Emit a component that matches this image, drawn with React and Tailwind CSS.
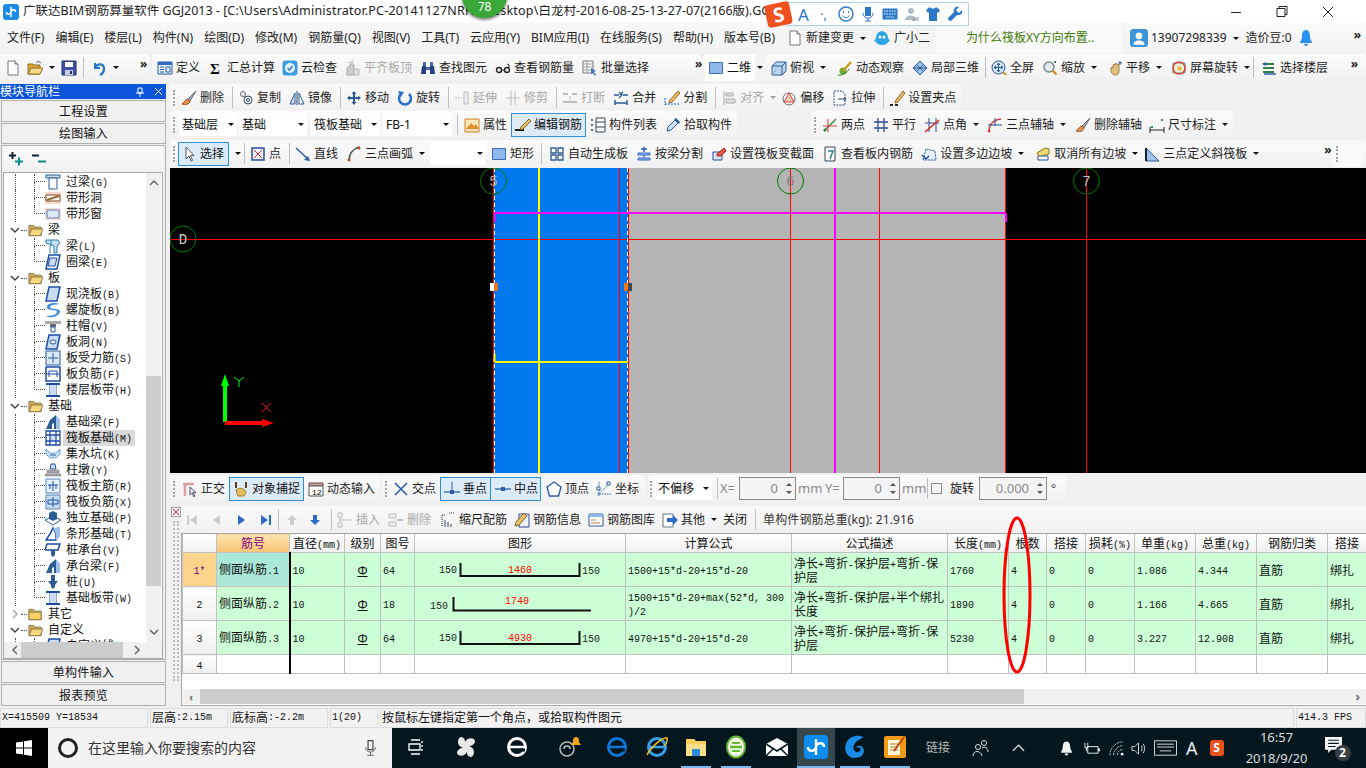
import React from "react";

// ---- little drawn icons, 16x16 box
const ic = {
  new: <><path d="M3 1h7l3 3v11H3z" fill="#fff" stroke="#777" /><path d="M10 1v3h3" fill="#ddd" stroke="#777" /></>,
  open: <><path d="M1 4h5l1 1h6v9H1z" fill="#d9a93e" stroke="#8a6a20" /><path d="M4 8h12l-3 6H1z" fill="#f7d98a" stroke="#8a6a20" /><path d="M9 3l2-2 3 2" fill="none" stroke="#3a6fb0" /></>,
  save: <><path d="M1 1h14v14H1z" fill="#3f4fa8" stroke="#23306e" /><path d="M4 2h8v5H4z" fill="#fff" /><path d="M4 10h8v5H4z" fill="#c8cce0" /><path d="M9 11h2v3H9z" fill="#23306e" /></>,
  undo: <><path d="M4 3v5h5" fill="none" stroke="#2a78c8" strokeWidth="2" /><path d="M4 8c2-5 9-5 9 1 0 3-2 5-4 6" fill="none" stroke="#2a78c8" strokeWidth="2.4" /></>,
  def: <><path d="M1 2h14v12H1z" fill="#e8f0fa" stroke="#2b5c9e" /><path d="M1 2h14v3H1z" fill="#2b6cc0" /><path d="M3 7h4M3 9.500h4M3 12h4M9 7h4v5H9z" fill="none" stroke="#2b5c9e" /></>,
  sigma: <text x="2" y="14" fontSize="15" fontWeight="700" fill="#111" fontFamily="Liberation Serif, serif">Σ</text>,
  cloud: <><rect x="0.500" y="0.500" width="15" height="15" rx="3" fill="#3d9be0" /><circle cx="8" cy="8" r="5" fill="#e8f4ff" /><path d="M5.500 8l2 2 3-4" fill="none" stroke="#2a78c8" strokeWidth="1.500" /></>,
  level: <><path d="M2 15V8l5-5 2 2v10z" fill="#ccc" stroke="#aaa" /><path d="M9 15V9h5v6z" fill="#ddd" stroke="#bbb" /><path d="M3 3l6-2" stroke="#bbb" /></>,
  binoc: <><path d="M2 6h4v8H1zM10 6h4l1 8h-5z" fill="#27407a" /><path d="M3 2h3v4H3zM10 2h3v4h-3zM6 7h4v3H6z" fill="#4a68a8" /></>,
  glasses: <><circle cx="4" cy="10" r="2.500" fill="none" stroke="#222" strokeWidth="1.400" /><circle cx="12" cy="10" r="2.500" fill="none" stroke="#222" strokeWidth="1.400" /><path d="M6.500 10h3M14 8V5l-2-1" fill="none" stroke="#222" /></>,
  batch: <><path d="M1 1h10v12H1z" fill="#fff" stroke="#777" /><path d="M1 4h10M1 7h10M1 10h10M5 1v12" stroke="#999" /><path d="M9 8l5 3-2 1 2 3-1 1-2-3-2 1z" fill="#4a78b8" /></>,
  sq: <path d="M1.500 2.500h13v11h-13z" fill="#8eb7ea" stroke="#3c6cb4" />,
  cube: <><path d="M1 6l4-4h10v9l-4 4H1z" fill="#bcd6ef" stroke="#2c5c94" /><path d="M1 6h10v9M11 6l4-4" fill="none" stroke="#2c5c94" /><path d="M5 2v9H1M5 11l-4 4" fill="none" stroke="#7aa0c8" strokeDasharray="1 1" /></>,
  orbit: <><circle cx="6" cy="11" r="3.500" fill="#68a838" /><path d="M6 11l8-9" stroke="#c8a020" strokeWidth="2.500" /><path d="M1 15c4 1 9-2 11-6" fill="none" stroke="#2c7c20" /></>,
  local3d: <><path d="M8 1l7 7-7 7-7-7z" fill="#9cc0e8" stroke="#2c5c94" /><path d="M4.500 4.500l7 7M11.500 4.500l-7 7M1 8h14" stroke="#2c5c94" /></>,
  full: <><circle cx="7.500" cy="7.500" r="6.500" fill="#d8e6f6" stroke="#2c5c94" /><path d="M7.500 3v9M3 7.500h9M7.500 3L6 5M7.500 3L9 5M7.500 12L6 10M7.500 12L9 10M3 7.500L5 6M3 7.500L5 9M12 7.500L10 6M12 7.500L10 9" fill="none" stroke="#2c5c94" /><path d="M12 12l3 3" stroke="#c89020" strokeWidth="2" /></>,
  zoom: <><circle cx="7" cy="7" r="5" fill="#e4eaf2" stroke="#788" strokeWidth="1.500" /><path d="M10.500 10.500l4 4" stroke="#c89020" strokeWidth="2.400" /><path d="M12 2h2M13 1v2" stroke="#345" /></>,
  pan: <><path d="M4 8l1-1 1 1V5l1-1 1 1V4l1-1 1 1v1l1-1 1 1v6c0 3-2 4-4 4H8c-2 0-3-2-4-3z" fill="#e0c080" stroke="#a08040" /><path d="M11 3h4M13 1v4" stroke="#34608c" /></>,
  rot: <><path d="M2 3h12v10H2z" fill="#dff0d0" stroke="#6a90b0" /><circle cx="8" cy="8" r="6" fill="none" stroke="#e04030" strokeWidth="1.500" /><path d="M6 8l3-2 2 3-3 2z" fill="#f0b030" /></>,
  layers: <><path d="M2 4h11M2 8h11M2 12h11" stroke="#2c8048" strokeWidth="2" /><path d="M5 2L1 4l4 2" fill="#2c60a8" /><path d="M3 14h12" stroke="#2c60a8" strokeWidth="1.500" /></>,
  brush: <><path d="M15 1L7 9l2 2z" fill="#a8b0c0" stroke="#666" /><path d="M7 9c-3 0-3 3-6 5 3 1 7 1 8-3z" fill="#e09050" stroke="#a05020" /></>,
  copy: <><circle cx="5" cy="4" r="2.500" fill="none" stroke="#667" /><circle cx="10" cy="10" r="4" fill="none" stroke="#345" /><circle cx="10" cy="10" r="1.500" fill="none" stroke="#345" /><path d="M6 6l2 2" stroke="#667" strokeDasharray="1 1" /></>,
  mirror: <><path d="M1 14L6 3v11z" fill="#cfe0f2" stroke="#2c5c94" /><path d="M15 14L10 3v11z" fill="#fff" stroke="#2c5c94" /><path d="M8 1v14" stroke="#345" /></>,
  move: <path d="M8 1l2.500 3H9v3h3V5.500L15 8l-3 2.500V9H9v3h1.500L8 15l-2.500-3H7V9H4v1.500L1 8l3-2.500V7h3V4H5.500z" fill="#2c5c94" />,
  rot2: <><path d="M12 4a6 6 0 1 1-8 0" fill="none" stroke="#2a70c8" strokeWidth="2.600" /><path d="M1 1l6 1-3 5z" fill="#2a70c8" /></>,
  extend: <><path d="M1 8h7" stroke="#bbb" strokeDasharray="2 1" /><path d="M10 2h4v12h-4z" fill="#eee" stroke="#bbb" /></>,
  trim: <path d="M6 1v14M10 1v14M1 8h14" stroke="#bbb" fill="none" />,
  brk: <><path d="M1 4h5M10 4h5M1 12h14" stroke="#bbb" strokeWidth="2" /><path d="M8 6v4" stroke="#bbb" /></>,
  merge: <><path d="M1 5h5M15 5h-5M6 2l3 3-3 3M10 2L7 5" fill="none" stroke="#2c5c94" strokeWidth="1.300" /><path d="M2 13h12M2 10v5M14 10v5" stroke="#2c5c94" strokeWidth="1.500" /></>,
  split: <><path d="M1 14h14M1 8v7" stroke="#2c5cd0" strokeDasharray="2 1" /><path d="M14 1L6 10l-1 3 3-1 8-9z" fill="#f0c060" stroke="#906020" /></>,
  align: <><path d="M3 1v14" stroke="#aaa" /><path d="M5 3h7v3H5zM5 9h9v4H5z" fill="#ddd" stroke="#aaa" /></>,
  offset: <><circle cx="8" cy="9" r="6" fill="#fff" stroke="#667" /><path d="M8 3l5 9H3z" fill="#f4c8b8" stroke="#d04830" /></>,
  stretch: <><path d="M2 1h8l3 3v11H2z" fill="#fff" stroke="#2c4c74" strokeDasharray="2 1" /><path d="M6 9h8M12 7l2 2-2 2" fill="none" stroke="#2c4c74" /></>,
  grip: <><path d="M1 15h3M6 15h3" stroke="#222" strokeWidth="2" /><path d="M14 1L7 10l-1 3 3-1 7-9z" fill="#e8c070" stroke="#906020" /></>,
  prop: <><path d="M1 2h14v13H1z" fill="#fbe6b8" stroke="#d08020" /><path d="M2 12l5-6 3 3 2-2 3 5z" fill="#e09030" /></>,
  edit: <><path d="M0 13h9" stroke="#111" strokeWidth="2" /><path d="M14 2L6 10l-1 3 3-1 8-8z" fill="#e8c070" stroke="#806020" /></>,
  list: <><path d="M1 2h2v2H1zM1 7h2v2H1zM1 12h2v2H1z" fill="#667" /><path d="M6 1h9v14H6zM6 5h9M6 10h9" fill="#fff" stroke="#345" /></>,
  pick: <><path d="M2 14l1-4 7-7 3 3-7 7z" fill="#cfe4f8" stroke="#2a5c9c" /><path d="M9 2l2-1 4 4-1 2z" fill="#2a5c9c" /></>,
  two: <><path d="M2 14L14 2" stroke="#2c8c38" strokeWidth="1.500" /><path d="M6 2v13M1 9h14" stroke="#d04040" /><circle cx="3" cy="13" r="1.500" fill="#2c8c38" /></>,
  para: <path d="M5 1v14M11 1v14M1 5h14M1 11h14" stroke="#2c4c94" strokeWidth="1.300" />,
  angle: <><path d="M5 1v14M12 1v14M1 6h14" stroke="#2c4c94" /><path d="M1 15L15 3" stroke="#e02020" strokeWidth="1.500" /></>,
  arc3: <><path d="M2 15C2 8 6 3 14 2" fill="none" stroke="#d84040" strokeWidth="1.500" /><circle cx="2" cy="14" r="1.500" fill="#d84040" /><path d="M1 8h14M8 1v8" stroke="#2c4c94" /></>,
  dim: <><path d="M1 13h14M1 10v6M15 10v6" stroke="#222" /><path d="M2 9h2v2H2zM12 2h2v2h-2z" fill="#2c9c38" /></>,
  cursor: <path d="M5 1v12l3-3 2 5 1.500-.6-2-5H13z" fill="#fff" stroke="#555" />,
  point: <><path d="M2 2h12v12H2z" fill="#e8f0fa" stroke="#2c4c94" strokeWidth="1.500" /><path d="M4 4l8 8M12 4l-8 8" stroke="#d03030" /></>,
  line: <><path d="M1 2l13 12" stroke="#2c60a8" strokeWidth="1.600" /><path d="M15 15l-6-1 4-4z" fill="#2c60a8" /></>,
  arc: <><path d="M3 15C3 8 7 3 13 1" fill="none" stroke="#555" strokeWidth="1.600" /><circle cx="3" cy="14" r="1.500" fill="#c04030" /><circle cx="13" cy="2" r="1.500" fill="#c04030" /></>,
  auto: <path d="M2 2h5v5H2zM9 2h5v5H9zM2 9h5v5H2zM9 9h5v5H9z" fill="#fff" stroke="#2c5c94" strokeWidth="1.300" />,
  beam: <><path d="M8 1v5M5 3h6" stroke="#2c60c0" strokeWidth="1.500" /><path d="M2 7h12v2H2zM2 12h12v2H2z" fill="#9cc0ec" stroke="#2c60c0" /><path d="M8 9v3" stroke="#2c60c0" /></>,
  raft: <><path d="M2 6h9v8H2z" fill="#dce8f8" stroke="#2c4c94" /><path d="M6 8l7-6 2 3-5 5H6z" fill="#e85848" stroke="#a02020" /></>,
  view: <><path d="M3 1h10v14H3z" fill="#fff" stroke="#345" /><path d="M6 5h5l-3 8" fill="none" stroke="#2c7c90" strokeWidth="1.500" /></>,
  poly: <><path d="M2 14L5 3l9 2 1 9z" fill="#e8f0fa" stroke="#2c4c94" strokeDasharray="2 1" /><path d="M1 9l4 4 3-3" fill="none" stroke="#1c4ca8" strokeWidth="1.500" /></>,
  cancel: <><path d="M2 7l8-5 4 1v5L4 11z" fill="#f4d870" stroke="#8a7020" /><path d="M3 10h10v4H3z" fill="#fff" stroke="#2c4c94" /></>,
  tri: <><path d="M2 2v13h13z" fill="#9cc4f0" stroke="#2c5c94" /><path d="M2 2v13" stroke="#123" strokeWidth="2" /></>,
  ortho: <><path d="M1 3h11M3 3v12" stroke="#d8a0a0" strokeWidth="2.500" /><path d="M8 6v8l2-2 2 4 1-.5-2-4h3z" fill="#eef" stroke="#556" /></>,
  snap: <><path d="M3 1v6M13 1v6" stroke="#6b3a10" strokeWidth="2" /><path d="M3 9c3-3 8-2 10 2l-2 4H5z" fill="#e8c060" stroke="#a08030" /></>,
  dyn: <><path d="M1 2h14v3H1z" fill="#d8a0a0" stroke="#555" /><path d="M1 5h14v10H1z" fill="#fff" stroke="#555" /><text x="4" y="14" fontSize="8" fontFamily="Liberation Mono, monospace">12</text></>,
  cross: <path d="M2 2l12 12M14 2L2 14" stroke="#2c60a8" strokeWidth="1.600" />,
  perp: <><path d="M8 1v10" stroke="#2c60a8" /><path d="M0 11h16" stroke="#2c60a8" strokeWidth="1.300" /><path d="M6 9h4v4H6z" fill="#2c60a8" /></>,
  mid: <><path d="M0 8h16" stroke="#2c60a8" strokeWidth="1.300" /><path d="M6 6h4v4H6z" fill="#2c60a8" /></>,
  vertex: <path d="M8 1l7 5-2.500 9h-9L1 6z" fill="#fff" stroke="#2c60a8" strokeWidth="1.400" />,
  coord: <><path d="M3 1v14M1 13h14M3 13L13 3" stroke="#2c60a8" strokeDasharray="1.500 1" /><path d="M11 1h3v3h-3zM1 6h3v3H1z" fill="#fff" stroke="#2c60a8" /></>,
  first: <><path d="M3 3v10" stroke="#ccc" strokeWidth="2" /><path d="M12 3v10L5 8z" fill="#ccc" /></>,
  prev: <path d="M11 3v10L4 8z" fill="#ccc" />,
  next: <path d="M5 3v10l7-5z" fill="#2c6cc8" />,
  last: <><path d="M13 3v10" stroke="#2c6cc8" strokeWidth="2" /><path d="M4 3v10l7-5z" fill="#2c6cc8" /></>,
  up: <path d="M8 3l5 5h-3v5H6V8H3z" fill="#ccc" />,
  down: <path d="M8 13l5-5h-3V3H6v5H3z" fill="#2c6cc8" />,
  ins: <><path d="M1 1h4v4H1zM1 11h4v4H1zM8 8h7" fill="none" stroke="#bbb" /><path d="M3 5v6M3 8h4" stroke="#bbb" /></>,
  del: <><path d="M1 2h7v4H1zM1 10h7v4H1z" fill="#eee" stroke="#bbb" /><path d="M9 8h6" stroke="#bbb" strokeWidth="2" /></>,
  scale: <><path d="M2 3v12M2 3h3M9 1h5" stroke="#222" strokeDasharray="1 1" /><path d="M5 8v7M8 10v5M11 12v3" stroke="#345" /></>,
  info: <><path d="M5 2h10v13H5z" fill="#eef2f8" stroke="#2c4c94" /><path d="M10 1L2 10l-1 4 4-1 8-9z" fill="#e8c070" stroke="#806020" /></>,
  lib: <><path d="M1 2h14v12H1z" fill="#fff" stroke="#2c5c94" /><path d="M1 2h14v3H1z" fill="#8eb7ea" /><path d="M3 8h5M3 11h9" stroke="#c08040" /></>,
  other: <><path d="M1 2h10v13H1z" fill="#fff" stroke="#678" /><path d="M5 6h6V3l5 5-5 5v-3H5z" fill="#2c6cc8" /></>,
};

// tree leaf icons, mostly blue boxes
const leaf = {
  lintel: <><path d="M1 1h14v3H1z" fill="#c9dcf2" stroke="#2c5c94" /><path d="M4 4h8v11H4z" fill="#fff" stroke="#2c5c94" /></>,
  hole: <><path d="M0 2h16v12H0z" fill="#f8d8c8" /><path d="M1 5h14v6H1z" fill="#fff" stroke="#7a4a20" /><path d="M2 10L14 6" stroke="#9a6a30" strokeWidth="2" /></>,
  win: <><path d="M0 2h16v12H0z" fill="#f8d8d0" /><path d="M2 4h12v8H2z" fill="#dce8f8" stroke="#5a84bc" /></>,
  beam: <><path d="M1 2h12l2 3-3 3v7H9V8L1 5z" fill="#c4def4" stroke="#2c7cb4" /><path d="M6 2v6M5 8v7" stroke="#2c7cb4" /></>,
  ring: <><path d="M4 1h11l-3 14H1z" fill="#fff" stroke="#1c4ca8" strokeWidth="1.500" /><path d="M5 4h7l-2 8H3z" fill="#c9dcf2" stroke="#1c4ca8" /></>,
  slab: <path d="M4 1h11l-3 14H1z" fill="#c9dcf2" stroke="#1c4ca8" strokeWidth="1.500" />,
  spiral: <path d="M15 2C6-1 1 3 2 6s10 1 10 4-7 4-11 4c5 3 13 0 14-4S4 8 5 5s6-2 10-3z" fill="#3c8cdc" />,
  cap: <><path d="M0 3h16v3H0z" fill="#aaa" /><path d="M5 6h6v3H5z" fill="#667" /><path d="M6 9h4v5H6z" fill="#fff" stroke="#2c5c94" /></>,
  opening: <><path d="M4 1h11l-3 14H1z" fill="#c9dcf2" stroke="#1c4ca8" strokeWidth="1.500" /><ellipse cx="8" cy="8" rx="3" ry="2" fill="#fff" stroke="#1c4ca8" /></>,
  rebarA: <><path d="M1 1h14v14H1z" fill="#dce8f8" stroke="#2c5c94" /><path d="M8 3v10M3 8h10" stroke="#2c5c94" /></>,
  rebarB: <><path d="M1 1h14v14H1z" fill="#fff" stroke="#1c4ca8" strokeWidth="1.500" /><path d="M2 8h12M4 5h8M4 5v6M12 5v6" stroke="#1c4ca8" /></>,
  band: <><path d="M1 2h14M1 14h14" stroke="#1c4ca8" strokeWidth="2" /><path d="M5 2v12M11 2v12" stroke="#1c4ca8" /><path d="M5 3h6v10H5z" fill="#c9dcf2" /></>,
  fbeam: <><path d="M1 15l4-9 6-5v14H9V9l-2 1v5z" fill="#2c5c94" /><path d="M11 1l4 5v9h-4z" fill="#9cc0e8" /></>,
  raft: <><path d="M1 1h14v14H1zM5 1v14M11 1v14M1 5h14M1 11h14" fill="none" stroke="#1c4ca8" strokeWidth="1.300" /><path d="M6 6h4v4H6z" fill="#c9dcf2" /></>,
  pit: <><path d="M1 3l4 4h6l4-4v5l-4 4H5L1 8z" fill="#c4e0f8" stroke="#4a88c8" strokeDasharray="2 1" /><path d="M5 9h6" stroke="#2c5c94" /></>,
  pier: <><path d="M6 2h4l1 5H5z" fill="#c9dcf2" stroke="#2c5c94" /><path d="M2 8h12v3H2zM0 12h16v2H0z" fill="#aaa" stroke="#667" strokeWidth=".5" /></>,
  main: <><path d="M1 1h14v14H1z" fill="#e8f2fc" stroke="#5a84bc" /><path d="M8 3v10M3 7h10M5 7v4M11 7v4" stroke="#1c4ca8" /></>,
  neg: <><path d="M1 1h14v14H1z" fill="#c9dcf2" stroke="#5a84bc" /><path d="M8 3v10M3 6h10M3 10h10M3 6v4M13 6v4" stroke="#1c4ca8" /></>,
  iso: <><path d="M0 10l8-4 8 4-8 5z" fill="#fff" stroke="#2c5c94" /><path d="M4 3l4-2 4 2v6l-4 2-4-2z" fill="#2c5c94" /></>,
  strip: <><path d="M1 14h10V8l-3-6-3 6z" fill="#fff" stroke="#1c4ca8" strokeWidth="1.500" /><path d="M8 2l7-1v10l-4 3V8z" fill="#9cc0e8" /></>,
  pilecap: <><path d="M2 2h13l-2 6H0z" fill="#fff" stroke="#1c4ca8" strokeWidth="1.500" /><path d="M6 8h4v5l-2 2-2-2z" fill="#2c5c94" /></>,
  pile: <path d="M6 1h4v6h3l-3 4v2l-2 2-2-2v-2L3 7h3z" fill="#2c5c94" />,
};

// ---- small parts

const Ic = ({ name }) => <svg viewBox="0 0 16 16" className="w-4 h-4 shrink-0">{ic[name]}</svg>;

const Arrow = ({ gray, tight }) => (
  <span className={tight ? "w-2 ml-[2px] shrink-0 flex justify-center" : "w-2 ml-[5px] shrink-0 flex justify-center"}>
    <span className={gray ? "w-0 h-0 border-x-[3px] border-t-[3px] border-x-transparent border-t-[#999]" : "w-0 h-0 border-x-[3px] border-t-[3px] border-x-transparent border-t-[#111]"} />
  </span>
);

const Sep = () => <span className="w-px h-[21px] bg-[#bdbdbd] mr-[5px] shrink-0" />;
const Grip = () => <span className="w-[3px] h-[16px] border-l-2 border-dotted border-[#a5a5a5] shrink-0" />;
const More = ({ className }) => <span className={className + " text-[12px] font-bold leading-none text-[#222] -mt-[7px] shrink-0"}>»</span>;

const Tool = ({ icon, label, gray, arrow, className = "mr-2" }) => (
  <div className={"flex items-center gap-[3px] shrink-0 whitespace-nowrap " + className}>
    <Ic name={icon} />
    <span className={gray ? "text-[#a8a8a8]" : "text-[#1c1c1c]"}>{label}</span>
    {arrow && <Arrow gray={gray} tight />}
  </div>
);

const Pressed = ({ icon, label, className }) => (
  <div className={"flex items-center gap-[3px] h-[24px] border border-[#2d8fdc] bg-[#dcebf8] whitespace-nowrap shrink-0 " + className}>
    <Ic name={icon} />
    <span>{label}</span>
  </div>
);

const Combo = ({ text, className }) => (
  <div className={"h-[23px] bg-white flex items-center justify-between pl-[3px] pr-[3px] shrink-0 whitespace-nowrap " + className}>
    <span>{text}</span>
    <span className="w-0 h-0 border-x-[3px] border-t-[3px] border-x-transparent border-t-[#111]" />
  </div>
);

const Group = ({ children, className }) => (
  <div className={"flex items-center rounded-sm shrink-0 bg-gradient-to-b from-[#fbfbfb] to-[#f1f1f1] " + className}>{children}</div>
);

// latin runs in these grid/tree texts are a narrow fixed font
const T = ({ s }) =>
  s.split(/([\x00-\x7f]+)/).map((p, i) =>
    /[\x00-\x7f]/.test(p) ? (
      <span key={i} className="font-['Liberation_Mono',monospace] text-[10px]">{p}</span>
    ) : (
      p
    )
  );

// ---- title + menu

const menus = ["文件(F)", "编辑(E)", "楼层(L)", "构件(N)", "绘图(D)", "修改(M)", "钢筋量(Q)", "视图(V)", "工具(T)", "云应用(Y)", "BIM应用(I)", "在线服务(S)", "帮助(H)", "版本号(B)"];

const TitleBar = () => (
  <div className="h-[23px] bg-white flex items-center shrink-0">
    <div className="w-[16px] h-[16px] ml-[3px] mr-[4px] rounded-[3px] bg-[#1b8be8] flex items-center justify-center">
      <svg viewBox="0 0 16 16" className="w-3 h-3"><path d="M8 1v14M2 8c0 4 5 4 6 0s6-4 6 0" fill="none" stroke="#fff" strokeWidth="2" /></svg>
    </div>
    <span className="w-[745px] overflow-hidden whitespace-nowrap text-[#222] text-[12.500px]">
      广联达BIM钢筋算量软件 GGJ2013 - [<span className="tracking-[0.200px]">C:\Users\Administrator.PC-20141127NRHI\Desktop\</span>白龙村-2016-08-25-13-27-07(2166版).GGJ12]
    </span>
    <svg viewBox="0 0 117 16" className="w-[117px] h-4 ml-auto mr-[18px]" fill="none" stroke="#222">
      <path d="M0 8.500h10M46 4.500h8v8h-8zM48 4.500v-2h8v8h-2M92 3l10 10M102 3L92 13" />
    </svg>
  </div>
);

const MenuBar = () => (
  <div className="h-[30px] flex items-center shrink-0 bg-[#f4f4f4] text-[#222]">
    <div className="flex items-center h-full pl-[7px] w-[787px] shrink-0 bg-gradient-to-b from-[#f8f8f8] to-[#f2f2f2]">
      {menus.map((m) => (
        <span key={m} className="mr-[11px] whitespace-nowrap shrink-0">{m}</span>
      ))}
    </div>
    <div className="flex items-center h-full w-[149px] shrink-0">
      <Tool icon="new" label="新建变更" arrow className="mr-[7px]" />
      <svg viewBox="0 0 16 16" className="w-4 h-4 mr-1 shrink-0"><path d="M2 8c0-9 12-9 12 0l2 3-2 1c-1 4-11 4-12 0l-2-1z" fill="#2ea3e8" /><circle cx="6" cy="7" r="1.500" fill="#fff" /><circle cx="10" cy="7" r="1.500" fill="#fff" /></svg>
      <span className="whitespace-nowrap">广小二</span>
    </div>
    <div className="w-[186px] h-full shrink-0 bg-[#f9f9f9] pl-[30px] flex items-center text-[#3d7a06] whitespace-nowrap">为什么筏板XY方向布置..</div>
    <div className="w-[239px] h-full ml-[5px] shrink-0 flex items-center rounded-sm bg-gradient-to-b from-[#fbfbfb] to-[#f1f1f1] pl-[3px]">
      <svg viewBox="0 0 16 16" className="w-[18px] h-[18px]"><rect width="16" height="16" rx="3" fill="#3d94d8" /><circle cx="8" cy="6" r="3" fill="#fff" /><path d="M3 14c0-5 10-5 10 0z" fill="#fff" /></svg>
      <span className="ml-[3px]">13907298339</span>
      <Arrow />
      <span className="ml-[6px]">造价豆:0</span>
      <svg viewBox="0 0 16 16" className="w-4 h-[18px] ml-[6px]"><path d="M8 0c-3 0-4 3-4 7 0 3-2 4-2 6h12c0-2-2-3-2-6 0-4-1-7-4-7zM6 14a2 2 0 0 0 4 0z" fill="#2a8ff0" /></svg>
      <More className="ml-auto mr-[5px]" />
    </div>
  </div>
);

const Row1 = () => (
  <div className="h-[27px] mt-px flex items-center shrink-0">
    <Group className="w-[150px] h-full pl-[5px]">
      <Ic name="new" />
      <span className="ml-[6px]"><Ic name="open" /></span>
      <Arrow />
      <span className="ml-[5px] mr-[6px]"><Ic name="save" /></span>
      <Sep />
      <span className="ml-[2px]"><Ic name="undo" /></span>
      <Arrow />
      <More className="ml-[20px]" />
    </Group>
    <Group className="w-[549px] h-full ml-[2px] pl-[5px]">
      <Tool icon="def" label="定义" />
      <Tool icon="sigma" label="汇总计算" className="mr-[7px]" />
      <Tool icon="cloud" label="云检查" />
      <Tool icon="level" label="平齐板顶" gray />
      <Tool icon="binoc" label="查找图元" />
      <Tool icon="glasses" label="查看钢筋量" />
      <Tool icon="batch" label="批量选择" />
      <More className="ml-[38px]" />
    </Group>
    <Group className="ml-[2px] w-[663px] h-full pl-[2px]">
      <div className="flex items-center gap-[3px] h-full bg-white pl-[3px] pr-[4px] w-[50px] shrink-0">
        <Ic name="sq" />
        <span>二维</span>
      </div>
      <span className="bg-[#f3f3f3] h-full w-[11px] flex items-center mr-[5px] shrink-0"><span className="-ml-[4px]"><Arrow /></span></span>
      <Tool icon="cube" label="俯视" arrow className="mr-[10px]" />
      <Tool icon="orbit" label="动态观察" />
      <Tool icon="local3d" label="局部三维" className="mr-[6px]" />
      <Sep />
      <Tool icon="full" label="全屏" />
      <Tool icon="zoom" label="缩放" arrow className="mr-[9px]" />
      <Tool icon="pan" label="平移" arrow className="mr-[8px]" />
      <Tool icon="rot" label="屏幕旋转" arrow className="mr-[2px]" />
      <Sep />
      <span className="w-[2px] shrink-0" />
      <Tool icon="layers" label="选择楼层" />
      <More className="ml-auto mr-[8px]" />
    </Group>
  </div>
);

const Row2 = () => (
  <Group className="w-[791px] h-[27px] pl-[3px]">
    <Grip />
    <span className="w-[5px] shrink-0" />
    <Tool icon="brush" label="删除" />
    <Sep />
    <Tool icon="copy" label="复制" />
    <Tool icon="mirror" label="镜像" />
    <Sep />
    <Tool icon="move" label="移动" />
    <Tool icon="rot2" label="旋转" />
    <Sep />
    <Tool icon="extend" label="延伸" gray />
    <Tool icon="trim" label="修剪" gray />
    <Sep />
    <Tool icon="brk" label="打断" gray />
    <Tool icon="merge" label="合并" />
    <Tool icon="split" label="分割" />
    <Sep />
    <Tool icon="align" label="对齐" gray arrow className="mr-[4px]" />
    <Tool icon="offset" label="偏移" />
    <Tool icon="stretch" label="拉伸" />
    <Sep />
    <Tool icon="grip" label="设置夹点" />
  </Group>
);

const Row3 = () => (
  <div className="h-[27px] flex shrink-0">
    <Group className="w-[567px] h-full pl-[3px]">
      <Grip />
      <span className="w-[3px] shrink-0" />
      <Combo text="基础层" className="w-[58px] mr-[2px]" />
      <Combo text="基础" className="w-[68px] mr-[4px]" />
      <Combo text="筏板基础" className="w-[69px] mr-[3px]" />
      <Combo text="FB-1" className="w-[69px] mr-[5px]" />
      <Sep />
      <span className="w-px shrink-0" />
      <Tool icon="prop" label="属性" className="mr-1" />
      <Pressed icon="edit" label="编辑钢筋" className="w-[75px] pl-[3px] mr-1" />
      <Tool icon="list" label="构件列表" />
      <Tool icon="pick" label="拾取构件" />
    </Group>
    <Group className="w-[422px] h-full ml-[74px] pl-[3px]">
      <Grip />
      <span className="w-[5px] shrink-0" />
      <Tool icon="two" label="两点" />
      <Tool icon="para" label="平行" />
      <Tool icon="angle" label="点角" arrow className="mr-[7px]" />
      <Tool icon="arc3" label="三点辅轴" arrow className="mr-[8px]" />
      <Tool icon="brush" label="删除辅轴" className="mr-[7px]" />
      <Tool icon="dim" label="尺寸标注" arrow />
    </Group>
  </div>
);

const Row4 = () => (
  <div className="h-[27px] mt-[2px] flex shrink-0">
    <Group className="w-[1196px] h-full pl-[3px]">
      <Grip />
      <span className="w-[2px] shrink-0" />
      <Pressed icon="cursor" label="选择" className="w-[51px] pl-[2px]" />
      <Arrow />
      <span className="w-[2px] shrink-0" />
      <Sep />
      <Tool icon="point" label="点" />
      <Sep />
      <Tool icon="line" label="直线" />
      <Tool icon="arc" label="三点画弧" arrow className="mr-[4px]" />
      <Combo text="" className="w-[56px] mr-[5px]" />
      <Tool icon="sq" label="矩形" className="mr-[7px]" />
      <Sep />
      <span className="w-[2px] shrink-0" />
      <Tool icon="auto" label="自动生成板" className="mr-[8px]" />
      <Tool icon="beam" label="按梁分割" className="mr-[8px]" />
      <Tool icon="raft" label="设置筏板变截面" />
      <Tool icon="view" label="查看板内钢筋" />
      <Tool icon="poly" label="设置多边边坡" arrow className="mr-[10px]" />
      <Tool icon="cancel" label="取消所有边坡" arrow className="mr-[5px]" />
      <Tool icon="tri" label="三点定义斜筏板" arrow />
      <More className="ml-[56px]" />
      <div className="ml-auto mr-1 flex items-center w-[30px] h-full bg-[#fafafa] pl-1 shrink-0"><Grip /></div>
    </Group>
  </div>
);

// ---- CAD view

const AxisMark = ({ x, y, t, c }) => (
  <g>
    <circle cx={x} cy={y} r="13" fill="none" stroke="#007a00" />
    <text x={x} y={y + 5} textAnchor="middle" fontSize="14" fontFamily="Liberation Mono, monospace" fill={c}>{t}</text>
  </g>
);

const Canvas = () => (
  <svg viewBox="170 168 1196 305" className="w-[1196px] h-[305px] block shrink-0 mt-px bg-black">
    <rect x="494" y="168" width="134" height="305" fill="#0078f0" />
    <rect x="628" y="168" width="377" height="305" fill="#b4b4b4" />
    <g fill="none" strokeWidth="1" stroke="#f00">
      <path d="M170 239.500h1196M493.500 168v305M619.500 168v305M628.500 168v305M790.500 168v305M879.500 168v305M1005.500 168v305M1086.500 168v305" />
    </g>
    <path d="M494.500 168v305M627.500 168v305" stroke="#fff" strokeDasharray="4 3" />
    <path d="M539 168v305" stroke="#ff0" strokeWidth="2" />
    <path d="M495 362h133M494.500 354v8" stroke="#ff0" strokeWidth="2" fill="none" />
    <path d="M835 168v305" stroke="#f0f" strokeWidth="2" />
    <path d="M494 213h512M494.500 213v9M1006 213v9" stroke="#f0f" strokeWidth="2" fill="none" />
    <rect x="490" y="283" width="4" height="8" fill="#fff" />
    <rect x="494" y="283" width="4" height="8" fill="#e87820" />
    <rect x="624" y="283" width="4" height="8" fill="#e87820" />
    <rect x="628" y="283" width="4" height="8" fill="#3a4a50" />
    <AxisMark x={493.500} y={181} t="5" c="#b0a8a0" />
    <AxisMark x={790.500} y={181} t="6" c="#808080" />
    <AxisMark x={1086.500} y={181} t="7" c="#b0c8d8" />
    <AxisMark x={183} y={239} t="D" c="#d0d0d0" />
    {/* ucs */}
    <path d="M225 422V380" stroke="#0f0" strokeWidth="4" />
    <path d="M225 374l-4 12h8z" fill="#0f0" />
    <path d="M225 423h40" stroke="#f00" strokeWidth="4" />
    <path d="M274 423l-12-4v8z" fill="#f00" />
    <path d="M234 377l5 4 5-4M239 381v6" stroke="#0f0" fill="none" />
    <path d="M262 403l9 9M271 403l-9 9" stroke="#f00" fill="none" />
  </svg>
);

// ---- snap row

const Spin = ({ val, className }) => (
  <div className={"h-[23px] border border-[#8a8a8a] bg-[#f4f4f4] flex items-center justify-end shrink-0 " + className}>
    <span className="text-[#8a8a8a] text-[13px] mr-[5px]">{val}</span>
    <span className="w-[11px] mr-[1px] flex flex-col items-center gap-[5px]">
      <span className="w-0 h-0 border-x-[3px] border-b-[3px] border-x-transparent border-b-[#555]" />
      <span className="w-0 h-0 border-x-[3px] border-t-[3px] border-x-transparent border-t-[#555]" />
    </span>
  </div>
);

const SnapRow = () => (
  <div className="h-[27px] mt-[2px] flex shrink-0">
    <Group className="w-[210px] h-full pl-[3px]">
      <Grip />
      <span className="w-[6px] shrink-0" />
      <Tool icon="ortho" label="正交" className="mr-1" />
      <Pressed icon="snap" label="对象捕捉" className="w-[75px] pl-[3px] mr-[4px]" />
      <Tool icon="dyn" label="动态输入" />
    </Group>
    <Group className="w-[263px] h-full ml-[2px] pl-[3px]">
      <Grip />
      <span className="w-[5px] shrink-0" />
      <Tool icon="cross" label="交点" className="mr-1" />
      <Pressed icon="perp" label="垂点" className="w-[51px] pl-[3px]" />
      <Pressed icon="mid" label="中点" className="w-[51px] pl-[4px] -ml-px mr-[5px]" />
      <Tool icon="vertex" label="顶点" className="mr-[7px]" />
      <Tool icon="coord" label="坐标" />
    </Group>
    <Group className="w-[418px] h-full ml-[3px] pl-[2px]">
      <Grip />
      <span className="w-[2px] shrink-0" />
      <Combo text="不偏移" className="w-[57px] mr-[5px]" />
      <Sep />
      <span className="text-[#8a8a8a] w-[19px] -ml-[3px] text-[13px] shrink-0">X=</span>
      <Spin val="0" className="w-[57px]" />
      <span className="text-[#8a8a8a] ml-[2px] w-[23px] text-[13px] shrink-0">mm</span>
      <span className="text-[#8a8a8a] ml-[4px] w-[18px] text-[13px] shrink-0">Y=</span>
      <Spin val="0" className="w-[57px]" />
      <span className="text-[#8a8a8a] ml-[2px] mr-[2px] w-[23px] text-[13px] shrink-0">mm</span>
      <span className="w-px h-[21px] bg-[#bdbdbd] mr-[3px] shrink-0" />
      <span className="w-[11px] h-[11px] border border-[#8a8a8a] bg-[#f4f4f4] mr-[8px] shrink-0" />
      <span className="whitespace-nowrap">旋转</span>
      <Spin val="0.000" className="w-[68px] ml-[5px]" />
      <span className="ml-[4px] text-[#555]">°</span>
    </Group>
  </div>
);

// ---- rebar grid

const cols = ["w-[34px]", "w-[73px]", "w-[55px]", "w-[36px]", "w-[34px]", "w-[211px]", "w-[166px]", "w-[156px]", "w-[61px]", "w-[38px]", "w-[39px]", "w-[49px]", "w-[61px]", "w-[61px]", "w-[71px]", "w-[39px]"];
const heads = ["直径(mm)", "级别", "图号", "图形", "计算公式", "公式描述", "长度(mm)", "根数", "搭接", "损耗(%)", "单重(kg)", "总重(kg)", "钢筋归类", "搭接"];

const Shape = ({ num, long }) => (
  <svg viewBox="0 0 211 33" className="w-[211px] h-[33px] block">
    {long ? (
      <>
        <text x="15" y="22" fontSize="10" fontFamily="Liberation Mono, monospace" fill="#222">150</text>
        <path d="M38.500 10v13.500H176" fill="none" stroke="#111" strokeWidth="2" />
        <text x="102" y="17" textAnchor="middle" fontSize="10" fontFamily="Liberation Mono, monospace" fill="#f00">{num}</text>
      </>
    ) : (
      <>
        <text x="24" y="20" fontSize="10" fontFamily="Liberation Mono, monospace" fill="#222">150</text>
        <path d="M45.500 10v13h119V10" fill="none" stroke="#111" strokeWidth="2" />
        <text x="105" y="20" textAnchor="middle" fontSize="10" fontFamily="Liberation Mono, monospace" fill="#f00">{num}</text>
        <text x="167" y="21" fontSize="10" fontFamily="Liberation Mono, monospace" fill="#222">150</text>
      </>
    )}
  </svg>
);

const rows = [
  { head: "1*", name: "侧面纵筋.1", pic: 64, num: "1460", formula: ["1500+15*d-20+15*d-20"], desc: ["净长+弯折-保护层+弯折-保", "护层"], len: 1760, unit: "1.086", total: "4.344" },
  { head: "2", name: "侧面纵筋.2", pic: 18, num: "1740", long: true, formula: ["1500+15*d-20+max(52*d, 300", ")/2"], desc: ["净长+弯折-保护层+半个绑扎", "长度"], len: 1890, unit: "1.166", total: "4.665" },
  { head: "3", name: "侧面纵筋.3", pic: 64, num: "4930", formula: ["4970+15*d-20+15*d-20"], desc: ["净长+弯折-保护层+弯折-保", "护层"], len: 5230, unit: "3.227", total: "12.908" },
];

const bd = "border border-[#c0c0c0] px-[2px] pt-[2px] whitespace-nowrap overflow-hidden";

const Lines = ({ lines }) => (
  <div className="leading-[12px]">
    {lines.map((l) => (
      <div key={l}><T s={l} /></div>
    ))}
  </div>
);

const Grid = () => (
  <table className="table-fixed border-collapse w-[1184px] -mt-px text-[#111]">
    <colgroup>
      {cols.map((c, i) => (
        <col key={i} className={c} />
      ))}
    </colgroup>
    <tbody>
      <tr className="h-[19px]">
        <td className={bd + " bg-gradient-to-b from-white to-[#efefef]"} />
        <td className={bd + " text-center text-[#800080] bg-gradient-to-b from-[#fde3ae] to-[#f5c473]"}>筋号</td>
        {heads.map((h, i) => (
          <td key={i} className={bd + " text-center bg-gradient-to-b from-white to-[#efefef]"}><T s={h} /></td>
        ))}
      </tr>
      {rows.map((r, i) => (
        <tr key={r.head} className="h-[33px] bg-[#ccffd6]">
          <td className={i === 0 ? bd + " text-center bg-[#fdd48c] text-[#800080]" : bd + " text-center bg-gradient-to-b from-white to-[#efefef]"}><T s={r.head} /></td>
          <td className={i === 0 ? bd + " bg-[#aae8d8] border-r-2 border-r-black" : bd + " border-r-2 border-r-black"}><T s={r.name} /></td>
          <td className={bd}><T s="10" /></td>
          <td className={bd + " text-center"}><span className="text-[12px] underline">Φ</span></td>
          <td className={bd}><T s={String(r.pic)} /></td>
          <td className="border border-[#c0c0c0] p-0"><Shape num={r.num} long={r.long} /></td>
          <td className={bd}><Lines lines={r.formula} /></td>
          <td className={bd}><Lines lines={r.desc} /></td>
          <td className={bd}><T s={String(r.len)} /></td>
          <td className={bd}><T s="4" /></td>
          <td className={bd}><T s="0" /></td>
          <td className={bd}><T s="0" /></td>
          <td className={bd}><T s={r.unit} /></td>
          <td className={bd}><T s={r.total} /></td>
          <td className={bd}>直筋</td>
          <td className={bd}>绑扎</td>
        </tr>
      ))}
      <tr className="h-[19px] bg-white">
        <td className={bd + " text-center bg-gradient-to-b from-white to-[#efefef]"}><T s="4" /></td>
        <td className={bd + " border-r-2 border-r-black"} />
        {heads.map((h, i) => (
          <td key={i} className={bd} />
        ))}
      </tr>
    </tbody>
  </table>
);

const RebarPanel = () => (
  <div className="flex mt-[4px] h-[200px] shrink-0">
    <div className="w-[11px] shrink-0 flex flex-col items-center pt-[1px]">
      <svg viewBox="0 0 10 10" className="w-[10px] h-[10px] mb-1 shrink-0"><rect width="10" height="10" fill="#e8e8e8" stroke="#667" /><path d="M2 2l6 6M8 2L2 8" stroke="#b04040" /></svg>
      <span className="w-[6px] h-[160px] border-x-2 border-dotted border-[#bdbdbd]" />
    </div>
    <div className="flex-1 flex flex-col min-w-0">
      <div className="h-[27px] flex items-center shrink-0 pl-[4px] bg-gradient-to-b from-[#fafafa] to-[#f1f1f1]">
        <Ic name="first" />
        <span className="w-[8px] shrink-0" />
        <Ic name="prev" />
        <span className="w-[8px] shrink-0" />
        <Ic name="next" />
        <span className="w-[8px] shrink-0" />
        <Ic name="last" />
        <span className="w-[5px] shrink-0" />
        <Sep />
        <Ic name="up" />
        <span className="w-[7px] shrink-0" />
        <Ic name="down" />
        <span className="w-[8px] shrink-0" />
        <Sep />
        <Tool icon="ins" label="插入" gray className="mr-[8px]" />
        <Tool icon="del" label="删除" gray className="mr-[9px]" />
        <Tool icon="scale" label="缩尺配筋" className="mr-[7px]" />
        <Tool icon="info" label="钢筋信息" className="mr-[7px]" />
        <Tool icon="lib" label="钢筋图库" className="mr-[7px]" />
        <Tool icon="other" label="其他" arrow className="mr-[5px]" />
        <span className="mr-2 whitespace-nowrap">关闭</span>
        <Sep />
        <span className="ml-[2px] text-[#333] whitespace-nowrap tracking-[0.100px]">单构件钢筋总重(kg): 21.916</span>
      </div>
      <div className="flex-1 bg-white border border-[#a8a8a8] border-r-0 overflow-hidden flex flex-col min-h-0">
        <Grid />
        <div className="h-[15px] mt-auto mb-px bg-[#f0f0f0] flex items-center shrink-0">
          <span className="w-[18px] text-center text-[#666] text-[10px] font-bold">‹</span>
          <span className="w-[824px] h-full bg-[#cdcdcd]" />
          <span className="ml-auto mr-[6px] text-[#666] text-[12px] font-bold">›</span>
        </div>
      </div>
    </div>
  </div>
);

// ---- module tree

const tree = [
  ["lintel", "过梁(G)"],
  ["hole", "带形洞"],
  ["win", "带形窗", 1],
  ["g", "梁"],
  ["beam", "梁(L)"],
  ["ring", "圈梁(E)", 1],
  ["g", "板"],
  ["slab", "现浇板(B)"],
  ["spiral", "螺旋板(B)"],
  ["cap", "柱帽(V)"],
  ["opening", "板洞(N)"],
  ["rebarA", "板受力筋(S)"],
  ["rebarB", "板负筋(F)"],
  ["band", "楼层板带(H)", 1],
  ["g", "基础"],
  ["fbeam", "基础梁(F)"],
  ["raft", "筏板基础(M)", 0, 1],
  ["pit", "集水坑(K)"],
  ["pier", "柱墩(Y)"],
  ["main", "筏板主筋(R)"],
  ["neg", "筏板负筋(X)"],
  ["iso", "独立基础(P)"],
  ["strip", "条形基础(T)"],
  ["pilecap", "桩承台(V)"],
  ["fbeam", "承台梁(F)"],
  ["pile", "桩(U)"],
  ["band", "基础板带(W)", 1],
  ["c", "其它"],
  ["g", "自定义"],
  ["slab", "自定义线(X)"],
];

const Folder = ({ open }) => (
  <svg viewBox="0 0 16 14" className="w-[15px] h-[14px] shrink-0">
    <path d="M1 2h5l1 2h7v9H1z" fill="#c8a858" stroke="#8a7a50" />
    {open ? <path d="M4 6h12l-3 7H1z" fill="#fbd97c" stroke="#8a7a50" /> : <path d="M1 5h13v8H1z" fill="#fbd060" stroke="#8a7a50" />}
  </svg>
);

const Ic_leaf = ({ name }) => <svg viewBox="0 0 16 16" className="w-4 h-4 block">{leaf[name]}</svg>;

const TreeRow = ({ row }) => {
  const [key, label, last, sel] = row;
  if (key === "g" || key === "c") {
    return (
      <div className="h-4 flex items-center pl-[6px]">
        <svg viewBox="0 0 10 10" className="w-[10px] h-[10px] shrink-0">
          {key === "g" ? <path d="M1 3l4 4 4-4" fill="none" stroke="#444" strokeWidth="1.500" /> : <path d="M3 1l4 4-4 4" fill="none" stroke="#aaa" strokeWidth="1.500" />}
        </svg>
        <span className="w-[6px] border-t border-dotted border-[#555] mx-[1px]" />
        <Folder open={key === "g"} />
        <span className="ml-[5px]">{label}</span>
      </div>
    );
  }
  return (
    <div className="h-4 flex pl-[11px]">
      <span className="w-[19px] h-full border-l border-dotted border-[#555] shrink-0" />
      <span className="w-[11px] flex flex-col shrink-0">
        <span className="h-[8px] border-l border-b border-dotted border-[#555]" />
        <span className={last ? "h-[8px]" : "h-[8px] border-l border-dotted border-[#555]"} />
      </span>
      <span className="self-center shrink-0"><Ic_leaf name={key} /></span>
      <span className={sel ? "ml-[2px] pl-[3px] pr-[3px] bg-[#d9d9d9] leading-4 whitespace-nowrap" : "ml-[2px] pl-[3px] leading-4 whitespace-nowrap"}><T s={label} /></span>
    </div>
  );
};

const SideBtn = ({ children, className }) => (
  <div className={"border border-[#b0b0b0] bg-[#f0f0f0] flex items-center justify-center pt-px shrink-0 tracking-[0.300px] " + className}>{children}</div>
);

const Sidebar = () => (
  <div className="w-[166px] h-[621px] mr-[4px] shrink-0 flex flex-col pl-[1px]">
    <div className="h-[15px] bg-[#0a55d8] text-white flex items-center pr-[2px] shrink-0 -ml-px">
      <span>模块导航栏</span>
      <svg viewBox="0 0 10 10" className="w-[10px] h-[10px] ml-auto mr-[9px]"><path d="M3 1h4v5H3zM1 6h8M5 6v4" fill="none" stroke="#fff" /></svg>
      <svg viewBox="0 0 10 10" className="w-[9px] h-[9px] mr-[1px]"><path d="M1 1l8 8M9 1L1 9" stroke="#fff" /></svg>
    </div>
    <SideBtn className="h-[22px] mt-px">工程设置</SideBtn>
    <SideBtn className="h-[21px] mt-px">绘图输入</SideBtn>
    <div className="h-[515px] mt-[1px] border border-[#b0b0b0] flex flex-col shrink-0 pl-[1px] pr-[2px]">
      <div className="h-[26px] shrink-0 flex items-center gap-[7px] pl-[5px] bg-gradient-to-b from-[#fbfbfb] to-[#f1f1f1]">
        <svg viewBox="0 0 16 14" className="w-4 h-[14px]"><path d="M1 3.500h7M4.500 0v7" stroke="#123" strokeWidth="2" /><path d="M7 9.500h8M11 5.500v8" stroke="#0a8a8a" strokeWidth="2" /></svg>
        <svg viewBox="0 0 16 14" className="w-4 h-[14px]"><path d="M1 3.500h7" stroke="#123" strokeWidth="2" /><path d="M7 9.500h8" stroke="#0a8a8a" strokeWidth="2" /></svg>
      </div>
      <div className="h-[487px] shrink-0 flex flex-col border border-[#a8a8a8]">
        <div className="h-[469px] shrink-0 flex bg-white">
          <div className="flex-1 h-full overflow-hidden min-w-0 pt-px">
            {tree.map((r, i) => (
              <TreeRow key={i} row={r} />
            ))}
          </div>
          <div className="w-[15px] h-full bg-[#f0f0f0] flex flex-col items-center shrink-0 mr-px">
            <svg viewBox="0 0 10 10" className="w-[10px] h-[10px] mt-[5px] shrink-0"><path d="M1 7l4-4 4 4" fill="none" stroke="#666" strokeWidth="1.500" /></svg>
            <span className="w-full h-[210px] mt-[188px] bg-[#cdcdcd] shrink-0" />
            <svg viewBox="0 0 10 10" className="w-[10px] h-[10px] mt-auto mb-[5px] shrink-0"><path d="M1 3l4 4 4-4" fill="none" stroke="#666" strokeWidth="1.500" /></svg>
          </div>
        </div>
        <div className="h-[16px] shrink-0 bg-[#f0f0f0] flex items-center">
          <svg viewBox="0 0 10 10" className="w-[10px] h-[10px] ml-[6px] shrink-0"><path d="M7 1L3 5l4 4" fill="none" stroke="#666" strokeWidth="1.500" /></svg>
          <span className="w-[102px] h-full ml-[1px] bg-[#cdcdcd]" />
          <svg viewBox="0 0 10 10" className="w-[10px] h-[10px] ml-[9px] shrink-0"><path d="M3 1l4 4-4 4" fill="none" stroke="#666" strokeWidth="1.500" /></svg>
        </div>
      </div>
    </div>
    <SideBtn className="h-[22px] mt-px">单构件输入</SideBtn>
    <SideBtn className="h-[22px] mt-px">报表预览</SideBtn>
  </div>
);

// ---- bottom

const Cell = ({ className, children }) => (
  <div className={"h-full bg-[#f2f2f2] border border-[#dcdcdc] flex items-center pl-[1px] whitespace-nowrap shrink-0 overflow-hidden " + className}>{children}</div>
);

const StatusBar = () => (
  <div className="h-[20px] flex gap-[2px] shrink-0">
    <Cell className="w-[148px]"><T s="X=415509 Y=18534" /></Cell>
    <Cell className="w-[78px]"><T s="层高:2.15m" /></Cell>
    <Cell className="w-[98px]"><T s="底标高:-2.2m" /></Cell>
    <Cell className="w-[48px]"><T s="1(20)" /></Cell>
    <Cell className="w-[914px]"><T s="按鼠标左键指定第一个角点，或拾取构件图元" /></Cell>
    <Cell className="w-[70px]"><T s="414.3 FPS" /></Cell>
  </div>
);

const Slot = ({ className, bar, active, children }) => (
  <div className={active ? "h-full flex flex-col items-center shrink-0 bg-[#37474e] " + className : "h-full flex flex-col items-center shrink-0 " + className}>
    <div className="flex-1 flex items-center justify-center">{children}</div>
    {bar ? <span className={active ? "w-full h-[2px] bg-[#76b9ed]" : "w-[30px] h-[2px] bg-[#76b9ed]"} /> : <span className="h-[2px]" />}
  </div>
);

const Svg24 = ({ children }) => <svg viewBox="0 0 24 24" className="w-6 h-6">{children}</svg>;

const EIcon = ({ stroke, fill = "none" }) => (
  <Svg24>
    <circle cx="12" cy="12" r="8.500" fill={fill} stroke={stroke} strokeWidth="3" />
    <path d="M5 12h14" stroke={stroke} strokeWidth="2.500" />
    <path d="M20 15h-5" stroke="#04161e" strokeWidth="3" />
  </Svg24>
);

const Taskbar = () => (
  <div className="h-[40px] bg-[#04171f] flex items-center shrink-0 text-[#e6e6e6]">
    <div className="w-[48px] h-full bg-black flex items-center justify-center shrink-0">
      <svg viewBox="0 0 16 16" className="w-[16px] h-[16px]"><path d="M0 2.500l7-1v6H0zM8 1.300L16 0v7.500H8zM0 8.500h7v6l-7-1zM8 8.500h8V16l-8-1.300z" fill="#fff" /></svg>
    </div>
    <div className="w-[344px] h-full bg-[#f2f2f2] flex items-center shrink-0 text-[#333] text-[14px]">
      <span className="w-[20px] h-[20px] rounded-full border-[3px] border-[#222] ml-[10px] mr-[10px]" />
      <span>在这里输入你要搜索的内容</span>
      <svg viewBox="0 0 16 20" className="w-[13px] h-[18px] ml-auto mr-[15px]"><path d="M5 1h6v11H5z" fill="none" stroke="#444" strokeWidth="1.400" /><path d="M2 9c0 8 12 8 12 0M8 15v4M4 19h8" fill="none" stroke="#444" /></svg>
    </div>
    <Slot className="w-[48px]"><svg viewBox="0 0 16 16" className="w-[16px] h-[18px]"><path d="M3 1h9M3 15h9M1 5h11v6H1zM14 2v2M14 6v2M14 10v2" fill="none" stroke="#fff" strokeWidth="1.300" /></svg></Slot>
    <Slot className="w-[51px]">
      <Svg24><path d="M12 12C8 3 20 1 21 6c0 4-6 6-9 6zM12 12c9-3 10 9 5 10-4 0-5-6-5-10zM12 12c4 9-8 11-9 6 0-4 6-6 9-6zM12 12C3 15 2 3 7 2c4 0 5 6 5 10z" fill="#e8e8e8" /></Svg24>
    </Slot>
    <Slot className="w-[52px]"><EIcon stroke="#fff" /></Slot>
    <Slot className="w-[54px]">
      <Svg24>
        <circle cx="9" cy="14" r="7" fill="none" stroke="#bbb" strokeWidth="1.500" />
        <path d="M6 14a3 3 0 0 1 6 0" fill="none" stroke="#bbb" strokeWidth="1.500" />
        <path d="M18 2c-3 0-3 3-3 5l-2 3h10l-2-3c0-2 0-5-3-5z" fill="#f0a818" />
      </Svg24>
    </Slot>
    <Slot className="w-[40px]"><EIcon stroke="#0d78d8" /></Slot>
    <Slot className="w-[39px]">
      <Svg24>
        <circle cx="12" cy="12" r="8.500" fill="none" stroke="#36a0e8" strokeWidth="3" />
        <path d="M5 12h14" stroke="#36a0e8" strokeWidth="2.500" />
        <path d="M2 20C5 14 16 2 22 3c1 3-1 6-3 8" fill="none" stroke="#f4c020" strokeWidth="1.500" />
      </Svg24>
    </Slot>
    <Slot className="w-[40px]" bar>
      <Svg24><path d="M2 4h8l2 2h10v15H2z" fill="#f6cf5c" /><path d="M2 9h20v12H2z" fill="#fbe08a" /><path d="M8 14h8v7H8z" fill="#2c8ce0" /></Svg24>
    </Slot>
    <Slot className="w-[40px]" bar>
      <Svg24>
        <ellipse cx="12" cy="12" rx="9" ry="10.500" fill="#eef6e4" stroke="#68b838" strokeWidth="2" />
        <path d="M6 12h12" stroke="#68b838" strokeWidth="2.500" />
        <path d="M8 8h8M8 16h8" stroke="#68b838" strokeWidth="2" />
      </Svg24>
    </Slot>
    <Slot className="w-[41px]">
      <Svg24><path d="M1 9l11-6 11 6v12H1z" fill="#fff" /><path d="M1 9l11 7 11-7M1 21l8-8M23 21l-8-8" fill="none" stroke="#04171f" strokeWidth="1.500" /></Svg24>
    </Slot>
    <Slot className="w-[38px]" bar active>
      <svg viewBox="0 0 24 24" className="w-[24px] h-[26px]"><rect width="24" height="24" rx="4" fill="#0d8cf0" /><path d="M12 4v16M4 12c0 5 7 5 8 0s8-5 8 0" fill="none" stroke="#fff" strokeWidth="2.400" /></svg>
    </Slot>
    <Slot className="w-[40px]" bar>
      <svg viewBox="0 0 24 24" className="w-[26px] h-[26px]"><path d="M20 3C12-1 3 4 3 13c0 6 5 10 10 9 5 0 8-4 7-8-1-3-5-4-7-2l4 1c1 3-3 5-5 3-3-3-2-9 8-13z" fill="#1a8ce8" /></svg>
    </Slot>
    <Slot className="w-[39px]" bar>
      <Svg24><rect x="1" y="1" width="22" height="22" rx="2" fill="#f39a18" /><path d="M5 5h12v15H5z" fill="#fff7d8" /><path d="M7 9h8M7 12h8M7 15h8" stroke="#b08030" /><path d="M21 2L11 16" stroke="#c04010" strokeWidth="2" /></Svg24>
    </Slot>
    <div className="w-[48px] text-center text-[#b8b8b8] shrink-0">链接</div>
    <div className="w-[38px] flex justify-center shrink-0">
      <svg viewBox="0 0 18 18" className="w-[18px] h-[18px]"><circle cx="6" cy="8" r="2.500" fill="none" stroke="#ddd" /><circle cx="12" cy="4" r="2.500" fill="none" stroke="#ddd" /><path d="M1 17c0-6 8-6 9 0M10 9c3-2 6 0 6 4" fill="none" stroke="#ddd" /></svg>
    </div>
    <div className="w-[36px] flex justify-center shrink-0">
      <svg viewBox="0 0 14 8" className="w-[13px] h-[8px]"><path d="M1 7l6-6 6 6" fill="none" stroke="#ddd" strokeWidth="1.300" /></svg>
    </div>
    <div className="w-[24px] shrink-0" />
    <div className="flex items-center shrink-0">
      <svg viewBox="0 0 14 16" className="w-[13px] h-[16px] mr-[10px]"><path d="M7 1C4 1 3 4 3 7c0 3-2 4-2 6h12c0-2-2-3-2-6 0-3-1-6-4-6zM5 14a2 2 0 0 0 4 0z" fill="#f0f0f0" /></svg>
      <svg viewBox="0 0 18 16" className="w-[17px] h-[15px] mr-[9px]"><path d="M5 6h11v7H5zM2 2v5h3V2M3.500 7v4" fill="none" stroke="#eee" /><path d="M16 8h2v3h-2" fill="#eee" /></svg>
      <svg viewBox="0 0 16 16" className="w-[15px] h-[15px] mr-[7px]"><path d="M1 15A14 14 0 0 1 15 1M5 15A10 10 0 0 1 15 5M9 15A6 6 0 0 1 15 9" fill="none" stroke="#ddd" strokeDasharray="2 1" /><circle cx="14" cy="14" r="1.500" fill="#eee" /></svg>
      <svg viewBox="0 0 16 16" className="w-[15px] h-[15px] mr-[8px]"><path d="M1 6h3l4-4v12l-4-4H1zM11 5c1 2 1 4 0 6M13 3c2 3 2 7 0 10" fill="none" stroke="#ddd" /></svg>
      <svg viewBox="0 0 24 16" className="w-[23px] h-[16px] mr-[9px]"><path d="M.5.5h23v15H.5zM3 4h18M3 7h18M6 11h12" fill="none" stroke="#ddd" /></svg>
      <span className="text-[18px] leading-none text-[#eee] mr-[12px]">A</span>
      <span className="w-[14px] h-[16px] bg-[#e8501c] rounded-[3px] text-white text-[12px] leading-[16px] font-bold flex items-center justify-center">S</span>
    </div>
    <div className="w-[84px] ml-[11px] text-center text-[13px] leading-[21px] shrink-0 text-[#ddd]">
      <div>16:57</div>
      <div>2018/9/20</div>
    </div>
    <div className="ml-[6px] flex">
      <svg viewBox="0 0 16 16" className="w-[17px] h-[17px] mt-[1px]"><path d="M0 0h16v12H6l-3 3v-3H0z" fill="#f4f4f4" /><path d="M3 3h10M3 6h10M3 9h7" stroke="#04171f" /></svg>
      <span className="w-[16px] h-[16px] rounded-full bg-[#3a3f44] text-white font-bold text-[12px] flex items-center justify-center -ml-[7px] mt-[9px]">2</span>
    </div>
  </div>
);

// ---- floating bits over the title bar

const GreenBadge = () => (
  <div className="absolute left-[462px] -top-[27px] w-[45px] h-[45px] rounded-full bg-[#39a839] shadow-[0_2px_3px_rgba(0,0,0,0.5)] flex items-end justify-center pb-[5px] text-white text-[12px]">78</div>
);

const SogouBar = () => (
  <div className="absolute left-[766px] top-[2px] flex items-center">
    <div className="w-[25px] h-[23px] bg-[#f0501e] rounded-[4px] -rotate-12 flex items-center justify-center text-white font-bold text-[20px] z-10">S</div>
    <div className="w-[183px] h-[24px] -ml-[5px] bg-white border border-[#b0cfe8] flex items-center pl-[11px]">
      <span className="text-[#2a78c8] text-[17px] leading-none mr-[8px] w-[14px]">A</span>
      <span className="text-[#2a78c8] text-[13px] leading-none mr-[12px] w-[6px]">·,</span>
      <svg viewBox="0 0 16 16" className="w-4 h-4 mr-[6px]"><circle cx="8" cy="8" r="7" fill="none" stroke="#2a78c8" strokeWidth="1.400" /><path d="M4.500 9.500c2 3 5 3 7 0" fill="none" stroke="#2a78c8" /><path d="M5.500 5v2M10.500 5v2" stroke="#2a78c8" /></svg>
      <svg viewBox="0 0 16 16" className="w-4 h-4 mr-[6px]"><path d="M5 1h6v9H5z" fill="#2a78c8" /><path d="M3 7c0 7 10 7 10 0M8 12v3M5 15h6" fill="none" stroke="#2a78c8" /></svg>
      <svg viewBox="0 0 16 16" className="w-4 h-4 mr-[6px]"><rect x="0.500" y="2.500" width="15" height="11" rx="1" fill="#2a78c8" /><path d="M2 5h12M2 8h12M4 11h8" stroke="#fff" strokeDasharray="1.500 1" /></svg>
      <svg viewBox="0 0 16 16" className="w-4 h-4 mr-[5px]"><circle cx="7" cy="5" r="3" fill="#b0bcc8" /><path d="M1 14c0-6 11-6 11 0z" fill="#b0bcc8" /><text x="8" y="15" fontSize="6" fill="#778">26</text></svg>
      <svg viewBox="0 0 16 16" className="w-4 h-4 mr-[6px]"><path d="M5 1L1 4l2 3 1-1v9h8V6l1 1 2-3-4-3c-1 2-5 2-6 0z" fill="#2a78c8" /></svg>
      <svg viewBox="0 0 16 16" className="w-4 h-4"><path d="M15 4l-3 3-3-3 3-3c-3-1-6 1-5 5L1 12c0 2 1 3 3 3l6-6c4 1 6-2 5-5z" fill="#2a78c8" /></svg>
    </div>
  </div>
);

const App = () => (
  <div className="relative w-[1366px] h-[768px] overflow-hidden flex flex-col bg-[#f0f0f0] text-[12px] leading-none text-[#111] font-['Noto_Sans','Noto_Sans_CJK_SC',sans-serif]">
    <TitleBar />
    <MenuBar />
    <Row1 />
    <div className="flex h-[621px] mt-[3px] shrink-0">
      <Sidebar />
      <div className="flex-1 min-w-0 flex flex-col">
        <Row2 />
        <Row3 />
        <Row4 />
        <Canvas />
        <SnapRow />
        <RebarPanel />
      </div>
    </div>
    <div className="mt-[3px]"><StatusBar /></div>
    <Taskbar />

    <GreenBadge />
    <SogouBar />
    {/* hand-drawn red mark over the 根数 column */}
    <svg viewBox="0 0 32 160" className="absolute left-[1001px] top-[515px] w-[32px] h-[160px] pointer-events-none">
      <ellipse cx="16" cy="80" rx="13" ry="77" fill="none" stroke="#f00" strokeWidth="3" />
    </svg>
  </div>
);

export default App;
